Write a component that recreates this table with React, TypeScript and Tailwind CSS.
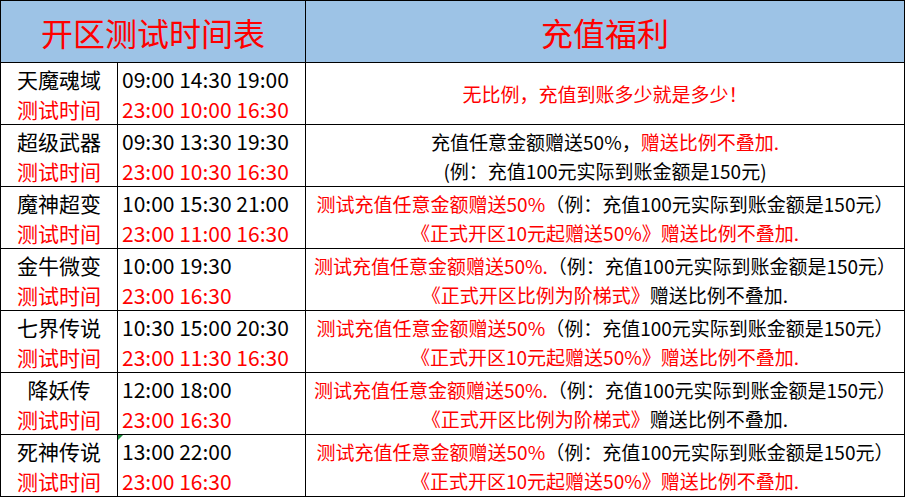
import React from 'react';

const font = { fontFamily: '"Noto Sans CJK SC", "Noto Sans", sans-serif' };

type Row = {
  name: string;
  times: string;
  test: string;
  bonus: React.ReactNode;
  flag?: boolean;
};

const R = ({ children }: { children: React.ReactNode }) => <span className="text-[#ff0000]">{children}</span>;

const example = '（例：充值100元实际到账金额是150元）';

const rows: Row[] = [
  {
    name: '天魔魂域',
    times: '09:00 14:30 19:00',
    test: '23:00 10:00 16:30',
    bonus: <div><R>无比例，充值到账多少就是多少！</R></div>,
  },
  {
    name: '超级武器',
    times: '09:30 13:30 19:30',
    test: '23:00 10:30 16:30',
    bonus: (
      <>
        <div>充值任意金额赠送50%，<R>赠送比例不叠加.</R></div>
        <div>(例：充值100元实际到账金额是150元)</div>
      </>
    ),
  },
  {
    name: '魔神超变',
    times: '10:00 15:30 21:00',
    test: '23:00 11:00 16:30',
    bonus: (
      <>
        <div><R>测试充值任意金额赠送50%</R>{example}</div>
        <div><R>《正式开区10元起赠送50%》赠送比例不叠加.</R></div>
      </>
    ),
  },
  {
    name: '金牛微变',
    times: '10:00 19:30',
    test: '23:00 16:30',
    bonus: (
      <>
        <div><R>测试充值任意金额赠送50%.</R>{example}</div>
        <div><R>《正式开区比例为阶梯式》</R>赠送比例不叠加.</div>
      </>
    ),
  },
  {
    name: '七界传说',
    times: '10:30 15:00 20:30',
    test: '23:00 11:30 16:30',
    bonus: (
      <>
        <div><R>测试充值任意金额赠送50%</R>{example}</div>
        <div><R>《正式开区10元起赠送50%》赠送比例不叠加.</R></div>
      </>
    ),
  },
  {
    name: '降妖传',
    times: '12:00 18:00',
    test: '23:00 16:30',
    bonus: (
      <>
        <div><R>测试充值任意金额赠送50%.</R>{example}</div>
        <div><R>《正式开区比例为阶梯式》</R>赠送比例不叠加.</div>
      </>
    ),
  },
  {
    name: '死神传说',
    times: '13:00 22:00',
    test: '23:00 16:30',
    flag: true,
    bonus: (
      <>
        <div><R>测试充值任意金额赠送50%</R>{example}</div>
        <div><R>《正式开区10元起赠送50%》赠送比例不叠加.</R></div>
      </>
    ),
  },
];

export default function App() {
  return (
    <div className="w-[905px] h-[497px] bg-white" style={font}>
      <div className="grid grid-cols-[116px_187px_598px] grid-rows-[repeat(8,61px)] gap-px p-px bg-black text-black">
        {/* header */}
        <div className="col-span-2 bg-[#9dc3e6] flex items-center justify-center text-[32px] text-[#ff0000]">
          开区测试时间表
        </div>
        <div className="bg-[#9dc3e6] flex items-center justify-center text-[32px] text-[#ff0000]">
          充值福利
        </div>

        {rows.map((r, i) => (
          <React.Fragment key={i}>
            <div className="bg-white flex flex-col items-center justify-center text-[21px] leading-[30px]">
              <div>{r.name}</div>
              <div className="text-[#ff0000]">测试时间</div>
            </div>
            <div className="relative bg-white flex flex-col justify-center pl-1 text-[21px] leading-[30px] whitespace-nowrap">
              {r.flag && (
                <span className="absolute left-0 top-0 w-0 h-0 border-t-[5px] border-r-[5px] border-t-[#1e8e3e] border-r-transparent" />
              )}
              <div>{r.times}</div>
              <div className="text-[#ff0000]">{r.test}</div>
            </div>
            <div className="bg-white flex flex-col items-center justify-center text-[19px] leading-[29px] whitespace-nowrap">
              {r.bonus}
            </div>
          </React.Fragment>
        ))}
      </div>
    </div>
  );
}
